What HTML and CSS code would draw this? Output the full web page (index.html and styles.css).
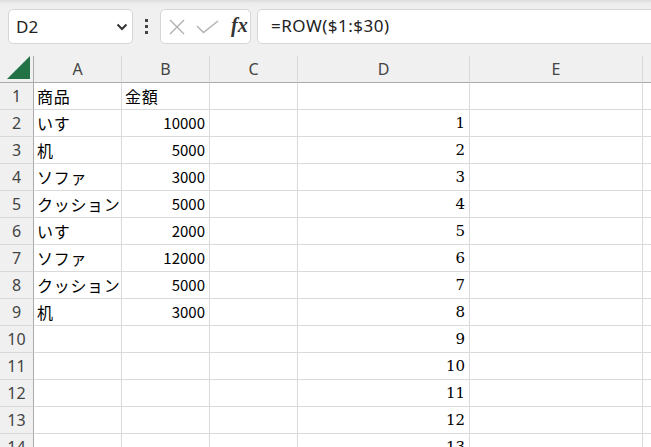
FILE: index.html
```html
<!DOCTYPE html>
<html lang="ja">
<head>
<meta charset="utf-8">
<link rel="stylesheet" href="styles.css">
</head>
<body>
<div class="toolbar">
  <div class="namebox">
    <span class="name">D2</span>
    <svg class="chev" width="12" height="8" viewBox="0 0 12 8"><path d="M1.5 1.5 L6 6 L10.5 1.5" fill="none" stroke="#333" stroke-width="2"/></svg>
  </div>
  <div class="dots"><i></i><i></i><i></i></div>
  <div class="btns">
    <svg width="18" height="18" viewBox="0 0 18 18"><path d="M2 2 L16 16 M16 2 L2 16" stroke="#b0b0b0" stroke-width="1.4" fill="none"/></svg>
    <svg width="24" height="14" viewBox="0 0 24 14"><path d="M1 6 L7.5 12.5 L22 1" stroke="#b0b0b0" stroke-width="1.4" fill="none"/></svg>
    <span class="fx">fx</span>
  </div>
  <div class="formula">=ROW($1:$30)</div>
</div>
<div class="sheet">
  <div class="corner"><svg width="23" height="23" viewBox="0 0 23 23"><path d="M0 23 L23 23 L23 0 Z" fill="#217346"/></svg></div>
  <div class="ch">A</div><div class="ch">B</div><div class="ch">C</div><div class="ch">D</div><div class="ch">E</div><div class="ch last"></div>

  <div class="rh">1</div><div class="c j">商品</div><div class="c j">金額</div><div class="c"></div><div class="c"></div><div class="c"></div><div class="c last"></div>
  <div class="rh">2</div><div class="c j">いす</div><div class="c r">10000</div><div class="c"></div><div class="c r d">1</div><div class="c"></div><div class="c last"></div>
  <div class="rh">3</div><div class="c j">机</div><div class="c r">5000</div><div class="c"></div><div class="c r d">2</div><div class="c"></div><div class="c last"></div>
  <div class="rh">4</div><div class="c j">ソファ</div><div class="c r">3000</div><div class="c"></div><div class="c r d">3</div><div class="c"></div><div class="c last"></div>
  <div class="rh">5</div><div class="c j">クッション</div><div class="c r">5000</div><div class="c"></div><div class="c r d">4</div><div class="c"></div><div class="c last"></div>
  <div class="rh">6</div><div class="c j">いす</div><div class="c r">2000</div><div class="c"></div><div class="c r d">5</div><div class="c"></div><div class="c last"></div>
  <div class="rh">7</div><div class="c j">ソファ</div><div class="c r">12000</div><div class="c"></div><div class="c r d">6</div><div class="c"></div><div class="c last"></div>
  <div class="rh">8</div><div class="c j">クッション</div><div class="c r">5000</div><div class="c"></div><div class="c r d">7</div><div class="c"></div><div class="c last"></div>
  <div class="rh">9</div><div class="c j">机</div><div class="c r">3000</div><div class="c"></div><div class="c r d">8</div><div class="c"></div><div class="c last"></div>
  <div class="rh">10</div><div class="c"></div><div class="c"></div><div class="c"></div><div class="c r d">9</div><div class="c"></div><div class="c last"></div>
  <div class="rh">11</div><div class="c"></div><div class="c"></div><div class="c"></div><div class="c r d">10</div><div class="c"></div><div class="c last"></div>
  <div class="rh">12</div><div class="c"></div><div class="c"></div><div class="c"></div><div class="c r d">11</div><div class="c"></div><div class="c last"></div>
  <div class="rh">13</div><div class="c"></div><div class="c"></div><div class="c"></div><div class="c r d">12</div><div class="c"></div><div class="c last"></div>
  <div class="rh">14</div><div class="c"></div><div class="c"></div><div class="c"></div><div class="c r d">13</div><div class="c"></div><div class="c last"></div>
</div>
</body>
</html>
```

FILE: styles.css
```css
* { box-sizing: border-box; }
html, body { margin: 0; padding: 0; }
body {
  width: 651px;
  height: 447px;
  overflow: hidden;
  background: #f0f0f0;
  font-family: "Noto Sans CJK JP", "Noto Sans", sans-serif;
  color: #000;
}
.toolbar {
  height: 56px;
  display: flex;
  align-items: flex-start;
  padding: 9px 0 0 8px;
  background: linear-gradient(#dcdcdc 0px, #ebebeb 3px, #f0f0f0 7px);
  overflow: hidden;
}
.namebox {
  width: 125px;
  height: 35px;
  background: #fff;
  border: 1px solid #d6d6d6;
  border-radius: 5px;
  display: flex;
  align-items: center;
  justify-content: space-between;
  padding: 0 4px 0 7px;
}
.name {
  font-family: "Noto Sans", sans-serif;
  font-size: 17px;
  color: #222;
}
.chev { margin-top: 1px; }
.dots {
  width: 27px;
  height: 35px;
  display: flex;
  flex-direction: column;
  align-items: center;
  justify-content: center;
  gap: 3px;
}
.dots i {
  display: block;
  width: 3px;
  height: 3px;
  background: #444;
}
.btns {
  width: 91px;
  height: 35px;
  background: #fff;
  border: 1px solid #d6d6d6;
  border-radius: 5px;
  display: flex;
  align-items: center;
  padding: 0 0 0 7px;
  gap: 10px;
}
.fx {
  font-family: "Liberation Serif", "DejaVu Serif", serif;
  font-style: italic;
  font-weight: bold;
  font-size: 20px;
  color: #333;
  margin-left: 1px;
  margin-top: -3px;
}
.formula {
  flex: 1;
  margin-left: 6px;
  margin-right: -10px;
  height: 35px;
  background: #fff;
  border: 1px solid #d6d6d6;
  border-radius: 5px;
  padding-left: 13px;
  font-family: "Noto Sans", sans-serif;
  font-size: 17px;
  letter-spacing: 0.5px;
  line-height: 32px;
  color: #222;
}
.sheet {
  display: grid;
  grid-template-columns: 34px 88px 88px 88px 172px 173px 1fr;
  grid-auto-rows: 27px;
  grid-template-rows: 27px;
  background: #fff;
}
.corner {
  background: #f0f0f0;
  border-right: 1px solid #ababab;
  border-bottom: 1px solid #ababab;
  display: flex;
  align-items: flex-end;
  justify-content: flex-end;
  padding: 0 3px 3px 0;
}
.corner svg { display: block; }
.ch {
  background: #f0f0f0;
  border-right: 1px solid #d8d8d8;
  border-bottom: 1px solid #ababab;
  text-align: center;
  font-family: "Noto Sans", sans-serif;
  font-size: 16px;
  line-height: 26px;
  color: #444;
}
.rh {
  background: #f0f0f0;
  border-right: 1px solid #ababab;
  border-bottom: 1px solid #d8d8d8;
  text-align: center;
  font-family: "Noto Sans", sans-serif;
  font-size: 16px;
  line-height: 26px;
  color: #444;
}
.c {
  border-right: 1px solid #dadada;
  border-bottom: 1px solid #dadada;
  font-size: 15px;
  line-height: 26px;
  padding: 0 4px 0 3px;
  white-space: nowrap;
  overflow: visible;
}
.c.j {
  font-size: 16px;
  letter-spacing: 0.7px;
}
.c.r { text-align: right; }
.c.d {
  font-family: "DejaVu Serif", serif;
  font-size: 15px;
}
.last { border-right: none; }
```
